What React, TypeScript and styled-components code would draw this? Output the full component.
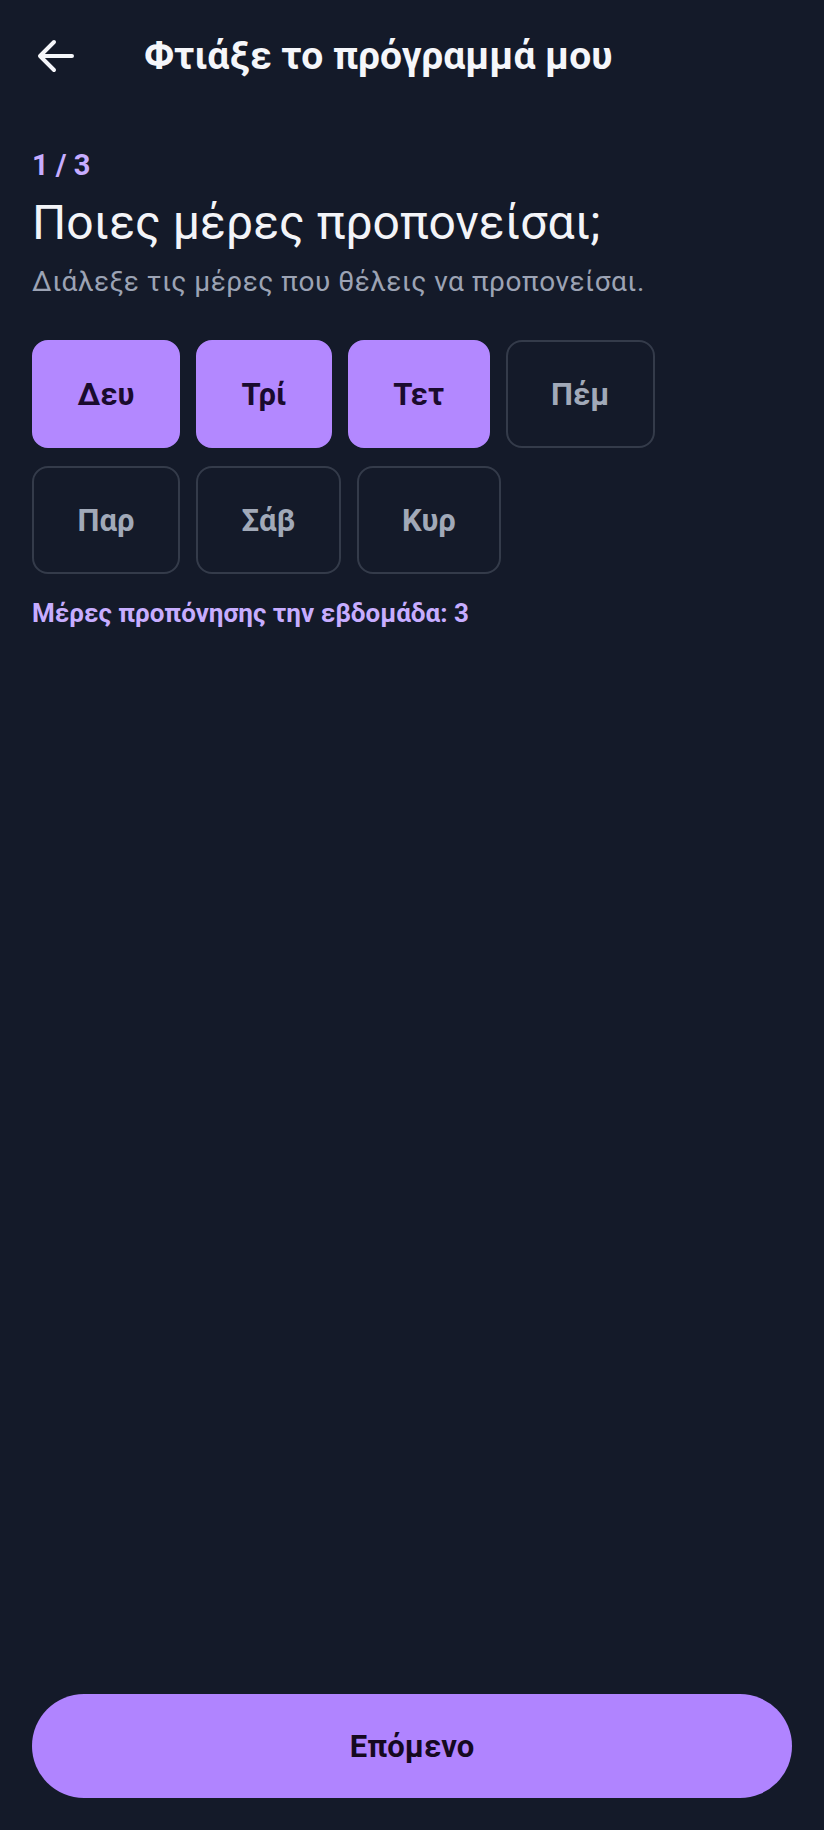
import React, { useState } from 'react';
import styled, { createGlobalStyle } from 'styled-components';

const GlobalStyle = createGlobalStyle`
  html, body {
    margin: 0;
    padding: 0;
    background: #141a29;
  }
  * {
    box-sizing: border-box;
  }
`;

const Screen = styled.div`
  width: 824px;
  height: 1830px;
  display: flex;
  flex-direction: column;
  background: #141a29;
  font-family: Roboto, 'Noto Sans', sans-serif;
  color: #f3f4f6;
`;

const Toolbar = styled.div`
  height: 112px;
  display: flex;
  align-items: center;
  padding-left: 32px;
`;

const BackButton = styled.button`
  width: 48px;
  height: 48px;
  padding: 0;
  border: none;
  background: transparent;
  display: flex;
  align-items: center;
  justify-content: center;
  margin-right: 64px;
  cursor: pointer;
`;

const Title = styled.h1`
  margin: 0;
  font-size: 39px;
  font-weight: 700;
  color: #f5f6fa;
`;

const Content = styled.div`
  flex: 1;
  display: flex;
  flex-direction: column;
  padding: 34px 32px 0;
`;

const Step = styled.div`
  font-size: 29px;
  font-weight: 700;
  color: #c7adff;
  line-height: 38px;
`;

const Heading = styled.h2`
  margin: 7px 0 0;
  font-size: 48px;
  font-weight: 400;
  line-height: 64px;
  color: #f3f4f8;
`;

const Subtitle = styled.p`
  margin: 7px 0 0;
  font-size: 28px;
  line-height: 40px;
  color: #9ca3b4;
  letter-spacing: 0.5px;
`;

const DayGrid = styled.div`
  display: flex;
  flex-wrap: wrap;
  gap: 18px 16px;
  margin-top: 38px;
  max-width: 660px;
`;

const DayChip = styled.button<{ $active: boolean }>`
  height: 108px;
  padding: 0 43.5px;
  border-radius: 16px;
  border: 2px solid ${(p) => (p.$active ? '#b388ff' : '#343b4a')};
  background: ${(p) => (p.$active ? '#b388ff' : 'transparent')};
  color: ${(p) => (p.$active ? '#1a0b2e' : '#a1a9b8')};
  font-family: Roboto, 'Noto Sans', sans-serif;
  font-size: 31px;
  font-weight: 700;
  cursor: pointer;
`;

const Count = styled.div`
  margin-top: 24px;
  font-size: 26px;
  font-weight: 700;
  color: #c7adff;
`;

const Footer = styled.div`
  padding: 0 32px 32px;
`;

const NextButton = styled.button`
  width: 100%;
  height: 104px;
  border: none;
  border-radius: 52px;
  background: #b084ff;
  color: #16091f;
  font-family: Roboto, 'Noto Sans', sans-serif;
  font-size: 31px;
  font-weight: 700;
  cursor: pointer;
`;

const DAYS = ['Δευ', 'Τρί', 'Τετ', 'Πέμ', 'Παρ', 'Σάβ', 'Κυρ'];

const BackArrow = () => (
  <svg width="48" height="48" viewBox="0 0 24 24" fill="none">
    <path
      d="M20 12H4.5M11 5l-7 7 7 7"
      stroke="#f5f6fa"
      strokeWidth="2"
      strokeLinecap="round"
      strokeLinejoin="round"
    />
  </svg>
);

export default function App() {
  const [selected, setSelected] = useState<string[]>(['Δευ', 'Τρί', 'Τετ']);

  const toggle = (day: string) => {
    setSelected((prev) => (prev.includes(day) ? prev.filter((d) => d !== day) : [...prev, day]));
  };

  return (
    <>
      <GlobalStyle />
      <Screen>
        <Toolbar>
          <BackButton aria-label="Πίσω">
            <BackArrow />
          </BackButton>
          <Title>Φτιάξε το πρόγραμμά μου</Title>
        </Toolbar>
        <Content>
          <Step>1 / 3</Step>
          <Heading>Ποιες μέρες προπονείσαι;</Heading>
          <Subtitle>Διάλεξε τις μέρες που θέλεις να προπονείσαι.</Subtitle>
          <DayGrid>
            {DAYS.map((day) => (
              <DayChip key={day} $active={selected.includes(day)} onClick={() => toggle(day)}>
                {day}
              </DayChip>
            ))}
          </DayGrid>
          <Count>Μέρες προπόνησης την εβδομάδα: {selected.length}</Count>
        </Content>
        <Footer>
          <NextButton>Επόμενο</NextButton>
        </Footer>
      </Screen>
    </>
  );
}
